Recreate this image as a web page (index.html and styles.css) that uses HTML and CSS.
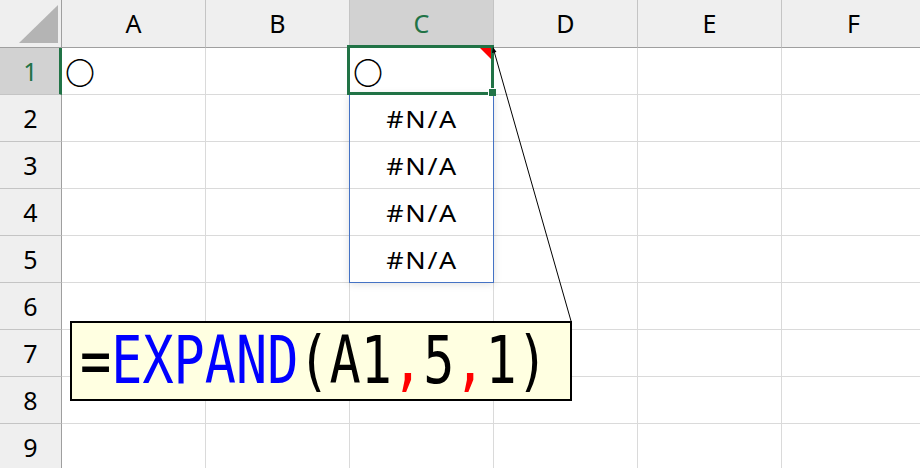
FILE: index.html
```html
<!DOCTYPE html>
<html lang="ja">
<head>
<meta charset="utf-8">
<title>EXPAND</title>
<link rel="stylesheet" href="styles.css">
</head>
<body>
<div class="sheet">
  <div class="corner"><svg class="corner-tri" width="62" height="48" viewBox="0 0 62 48"><polygon points="19,43 58,43 58,5" fill="#b4b4b4"/></svg></div>
  <div class="col-head">A</div>
  <div class="col-head">B</div>
  <div class="col-head sel">C</div>
  <div class="col-head">D</div>
  <div class="col-head">E</div>
  <div class="col-head">F</div>

  <div class="row-head sel">1</div>
  <div class="cell"><span class="mark">〇</span></div>
  <div class="cell"></div>
  <div class="cell active"><span class="mark">〇</span><span class="sel-box"></span><span class="comment-flag"></span><span class="fill-handle"></span></div>
  <div class="cell"></div>
  <div class="cell"></div>
  <div class="cell"></div>

  <div class="row-head">2</div>
  <div class="cell"></div>
  <div class="cell"></div>
  <div class="cell spill-start center"><span class="na">#N/A</span><span class="spill"></span></div>
  <div class="cell"></div>
  <div class="cell"></div>
  <div class="cell"></div>

  <div class="row-head">3</div>
  <div class="cell"></div>
  <div class="cell"></div>
  <div class="cell center"><span class="na">#N/A</span></div>
  <div class="cell"></div>
  <div class="cell"></div>
  <div class="cell"></div>

  <div class="row-head">4</div>
  <div class="cell"></div>
  <div class="cell"></div>
  <div class="cell center"><span class="na">#N/A</span></div>
  <div class="cell"></div>
  <div class="cell"></div>
  <div class="cell"></div>

  <div class="row-head">5</div>
  <div class="cell"></div>
  <div class="cell"></div>
  <div class="cell center"><span class="na">#N/A</span></div>
  <div class="cell"></div>
  <div class="cell"></div>
  <div class="cell"></div>

  <div class="row-head">6</div>
  <div class="cell"></div>
  <div class="cell"></div>
  <div class="cell"></div>
  <div class="cell"></div>
  <div class="cell"></div>
  <div class="cell"></div>

  <div class="row-head">7</div>
  <div class="cell"></div>
  <div class="cell"></div>
  <div class="cell"></div>
  <div class="cell"></div>
  <div class="cell"></div>
  <div class="cell"></div>

  <div class="row-head">8</div>
  <div class="cell"></div>
  <div class="cell"></div>
  <div class="cell"></div>
  <div class="cell"></div>
  <div class="cell"></div>
  <div class="cell"></div>

  <div class="row-head">9</div>
  <div class="cell"></div>
  <div class="cell"></div>
  <div class="cell"></div>
  <div class="cell"></div>
  <div class="cell"></div>
  <div class="cell"></div>

  <svg class="callout" width="920" height="468" viewBox="0 0 920 468">
    <line x1="494" y1="51" x2="571" y2="321" stroke="#000" stroke-width="1"/>
    <polygon points="493,47 496.5,52 492,53" fill="#000"/>
  </svg>
  <div class="formula"><span class="formula-text">=<span class="fn">EXPAND</span>(A1<span class="comma">,</span>5<span class="comma">,</span>1)</span></div>
</div>
</body>
</html>
```
FILE: styles.css
```css
html, body {
  margin: 0;
  padding: 0;
  background: #ffffff;
}

.sheet {
  position: relative;
  display: grid;
  grid-template-columns: 62px repeat(6, 144px);
  grid-template-rows: 48px repeat(9, 47px);
  width: 920px;
  height: 468px;
  overflow: hidden;
  font-family: "Noto Sans", "Liberation Sans", sans-serif;
}

.corner {
  box-sizing: border-box;
  background: #efefef;
  border-right: 1px solid #9f9f9f;
  border-bottom: 1px solid #9f9f9f;
}

.corner-tri {
  display: block;
}

.col-head {
  box-sizing: border-box;
  background: #efefef;
  border-right: 1px solid #c4c4c4;
  border-bottom: 1px solid #9f9f9f;
  display: flex;
  align-items: center;
  justify-content: center;
  font-size: 25px;
  color: #000;
  padding-bottom: 2px;
}

.col-head.sel {
  background: #d2d2d2;
  color: #217346;
}

.row-head {
  box-sizing: border-box;
  background: #efefef;
  border-right: 1px solid #9f9f9f;
  border-bottom: 1px solid #c4c4c4;
  display: flex;
  align-items: center;
  justify-content: center;
  font-size: 25px;
  color: #000;
}

.row-head.sel {
  background: #d2d2d2;
  color: #217346;
  border-right: 3px solid #217346;
  padding-left: 2px;
}

.cell {
  box-sizing: border-box;
  border-right: 1px solid #dadada;
  border-bottom: 1px solid #dadada;
  display: flex;
  align-items: center;
}

.cell.center {
  justify-content: center;
}

.mark {
  font-family: "Noto Sans CJK JP", sans-serif;
  font-size: 30px;
  font-weight: 300;
  line-height: 1;
  padding-left: 3px;
  color: #000;
}

.na {
  display: inline-block;
  font-size: 24px;
  letter-spacing: 1.5px;
  color: #000;
  padding-left: 2px;
  transform: scaleX(1.12);
}

.active,
.spill-start {
  position: relative;
}

.sel-box {
  position: absolute;
  top: -3px;
  left: -3px;
  right: -1px;
  bottom: -1px;
  border: 3px solid #217346;
  z-index: 3;
}

.comment-flag {
  position: absolute;
  top: 0;
  right: 2px;
  width: 0;
  height: 0;
  border-top: 11px solid #ff0000;
  border-left: 11px solid transparent;
  z-index: 2;
}

.fill-handle {
  position: absolute;
  right: -3px;
  bottom: -2px;
  width: 7px;
  height: 7px;
  background: #217346;
  border-left: 1px solid #fff;
  border-top: 1px solid #fff;
  z-index: 4;
}

.spill {
  position: absolute;
  top: -1px;
  left: -1px;
  width: 145px;
  height: 189px;
  box-sizing: border-box;
  border: 1px solid #4472c4;
  box-shadow: 0 1px 8px rgba(0, 0, 0, 0.13);
  z-index: 1;
}

.callout {
  position: absolute;
  left: 0;
  top: 0;
  z-index: 5;
}

.formula {
  position: absolute;
  left: 70px;
  top: 321px;
  width: 502px;
  height: 80px;
  box-sizing: border-box;
  border: 2px solid #000;
  background: #ffffe1;
  z-index: 6;
  padding: 1px 0 0 8px;
  overflow: hidden;
}

.formula-text {
  display: inline-block;
  font-family: "DejaVu Sans Mono", "Liberation Mono", monospace;
  font-size: 66px;
  line-height: 74px;
  color: #000;
  white-space: nowrap;
  transform: scaleX(0.785);
  transform-origin: left center;
}

.fn {
  color: #0000ff;
}

.comma {
  color: #ff0000;
}
```
